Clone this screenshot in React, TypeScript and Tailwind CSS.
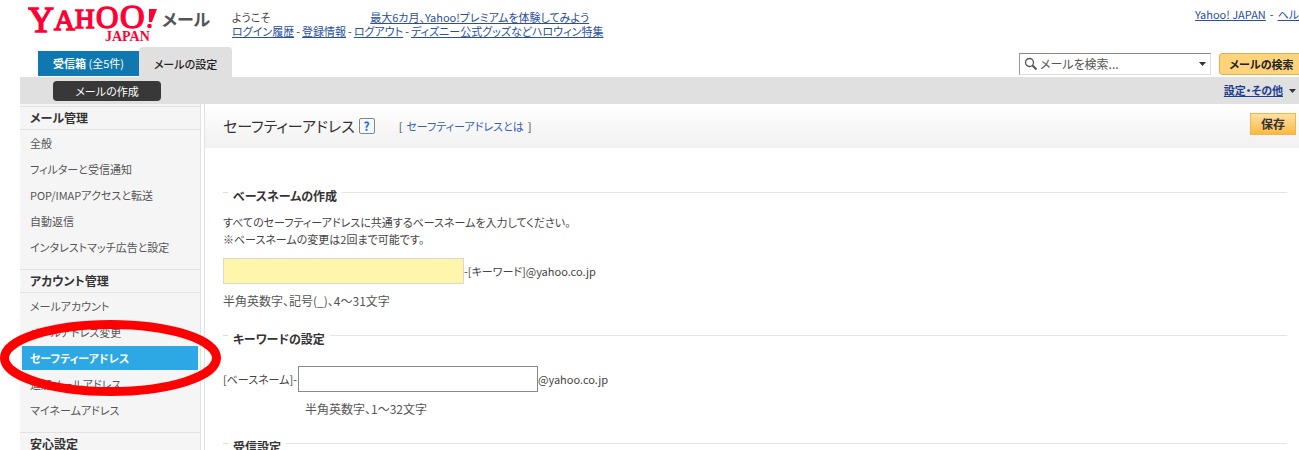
import { type ReactNode } from 'react';
import clsx from 'clsx';

const menu = [
  {
    title: 'メール管理',
    items: [
      '全般',
      'フィルターと受信通知',
      'POP/IMAPアクセスと転送',
      '自動返信',
      'インタレストマッチ広告と設定',
    ],
  },
  {
    title: 'アカウント管理',
    items: [
      'メールアカウント',
      'メールアドレス変更',
      'セーフティーアドレス',
      '追加メールアドレス',
      'マイネームアドレス',
    ],
  },
  { title: '安心設定', items: [] },
];

const current = 'セーフティーアドレス';

function Logo() {
  return (
    <a href="#" className="flex shrink-0">
      <svg width="184" height="44" viewBox="0 0 184 44" role="img" aria-label="Yahoo! JAPAN メール">
        <g fill="#ff0033" fontFamily="'Liberation Serif', serif">
          <g stroke="#ff0033">
            <text x="0" y="32" fontSize="36" strokeWidth="1.500">Y</text>
            <text x="26" y="30" fontSize="29" strokeWidth="1.500">A</text>
            <text x="47" y="28" fontSize="27" strokeWidth="1.500">H</text>
            <text x="68" y="28" fontSize="31" strokeWidth="1.500">O</text>
            <text x="92" y="28" fontSize="34" strokeWidth="1.500">O</text>
          </g>
          <path d="M121 9h8l-5 13h-3z" />
          <circle cx="121.500" cy="26" r="2.300" />
          <text x="77" y="41" fontSize="14" fontWeight="700">JAPAN</text>
        </g>
        <text x="134" y="26" fontSize="17" fontWeight="700" fill="#555" fontFamily="'Noto Sans CJK JP', sans-serif">
          メール
        </text>
      </svg>
    </a>
  );
}

function Caret() {
  return (
    <svg width="7" height="4" viewBox="0 0 7 4" aria-hidden="true">
      <path d="M0 0h7L3.500 4z" fill="#333" />
    </svg>
  );
}

function Header() {
  return (
    <header className="flex h-[47px] items-start pl-7">
      <Logo />
      <div className="ml-5 pt-2.5 leading-[14px]">
        <div className="flex gap-25">
          <span>ようこそ</span>
          <a href="#" className="text-[#2a4f9c] underline">最大6カ月、Yahoo!プレミアムを体験してみよう</a>
        </div>
        <nav className="flex gap-0.5">
          <a href="#" className="text-[#2a4f9c] underline">ログイン履歴</a>-
          <a href="#" className="text-[#2a4f9c] underline">登録情報</a>-
          <a href="#" className="text-[#2a4f9c] underline">ログアウト</a>-
          <a href="#" className="text-[#2a4f9c] underline">ディズニー公式グッズなどハロウィン特集</a>
        </nav>
      </div>
      <nav className="ml-auto flex w-[104px] gap-1 overflow-hidden pt-1.5 leading-4">
        <a href="#" className="text-[#2a4f9c] underline">Yahoo! JAPAN</a>-
        <a href="#" className="text-[#2a4f9c] underline">ヘルプ</a>
      </nav>
    </header>
  );
}

function TabBar() {
  return (
    <div className="flex h-[30px] items-end pl-[38px]">
      <button className="mb-px h-[25px] w-[101px] bg-[#0f78b0] text-white">
        <b>受信箱</b> (全5件)
      </button>
      <button className="h-[30px] w-[93px] rounded-t bg-[#e0e0e0] pt-1 font-medium text-[#222]">メールの設定</button>
      <form className="mb-0.5 ml-auto flex gap-2">
        <label className="flex h-[22px] w-48 items-center border border-[#ddd] border-t-[#888] border-l-[#999] bg-white px-1">
          <svg width="14" height="14" viewBox="0 0 14 14" fill="none" stroke="#555" aria-hidden="true">
            <circle cx="5.500" cy="5.500" r="4" strokeWidth="1.300" />
            <path d="M8.500 8.500l4 4" strokeWidth="2" />
          </svg>
          <input
            aria-label="メールを検索"
            placeholder="メールを検索..."
            className="min-w-0 flex-1 pl-0.5 text-xs outline-none placeholder:text-[#555]"
          />
          <Caret />
        </label>
        <button className="h-[22px] w-20 rounded-l border border-r-0 border-[#e0b050] bg-[#fdd37b] pl-1 font-bold text-[#222]">
          メールの検索
        </button>
      </form>
    </div>
  );
}

function Toolbar() {
  return (
    <div className="ml-5 flex h-[27px] items-center justify-between bg-[#e0e0e0] pr-[3px] pl-[33px]">
      <button className="h-5 w-[108px] rounded bg-[#383838] leading-5 text-white">メールの作成</button>
      <div className="flex items-center gap-1.5">
        <a href="#" className="font-bold text-[#1d3f8f] underline">設定・その他</a>
        <Caret />
      </div>
    </div>
  );
}

function Sidebar() {
  return (
    <nav className="w-[181px] shrink-0 border-r border-[#e2e2e2] bg-[#f5f5f5] pt-0.5">
      {menu.map((group) => (
        <section key={group.title} className="pb-[9px]">
          <h2 className="h-6 border-y border-[#e2e2e2] pl-2.5 text-xs leading-[22px] font-bold text-[#333]">
            {group.title}
          </h2>
          <ul>
            {group.items.map((item) => (
              <li key={item} className="relative h-[26px] px-0.5 py-px">
                <a
                  href="#"
                  className={clsx(
                    'block h-6 pl-2 leading-6',
                    item === current ? 'bg-[#2ea7e5] font-bold text-white' : 'text-[#555]',
                  )}
                >
                  {item}
                </a>
                {item === current && (
                  <svg
                    className="pointer-events-none absolute -top-[25px] -left-5 z-10"
                    width="222"
                    height="76"
                    viewBox="0 0 222 76"
                    aria-hidden="true"
                  >
                    <ellipse cx="110.500" cy="38" rx="106" ry="33.500" fill="none" stroke="#f00" strokeWidth="9" />
                  </svg>
                )}
              </li>
            ))}
          </ul>
        </section>
      ))}
    </nav>
  );
}

// Section heading with a thin rule running through it
function SectionTitle({ children }: { children: ReactNode }) {
  return (
    <h2 className="flex h-5 items-start gap-[5px] text-xs leading-5 font-bold text-[#333]">
      <span className="mt-1.5 h-px w-[5px] bg-[#ddd]" />
      {children}
      <span className="mt-1.5 h-px flex-1 bg-[#e4e4e4]" />
    </h2>
  );
}

function App() {
  return (
    <div className="flex h-screen flex-col overflow-hidden bg-white font-['Noto_Sans_CJK_JP',sans-serif] text-[11px] whitespace-nowrap text-[#444] [font-feature-settings:'palt']">
      <Header />
      <TabBar />
      <Toolbar />
      <div className="flex min-h-0 flex-1 pl-5">
        <Sidebar />
        <main className="ml-[3px] min-w-0 flex-1 border-l border-[#e2e2e2]">
          <div className="flex h-11 items-center bg-linear-to-b from-white to-[#f1f1f1] pr-[3px] pl-[18px]">
            <h1 className="text-[15px] text-[#333]">セーフティーアドレス</h1>
            <button
              aria-label="ヘルプ"
              className="ml-1 size-4 rounded-xs border border-[#888] bg-[#f4f8ff] text-xs leading-[14px] font-bold text-[#2266dd]"
            >
              ?
            </button>
            <span className="ml-6 flex gap-1">
              [ <a href="#" className="text-[#3a62a8]">セーフティーアドレスとは</a> ]
            </span>
            <button className="mb-1 ml-auto h-[22px] w-[46px] border border-[#f0b64e] bg-linear-to-b from-[#ffe0a0] to-[#fcb93c] text-xs font-bold text-[#333]">
              保存
            </button>
          </div>
          <form className="pt-[38px] pr-3 pl-[18px] leading-[17px]">
            <SectionTitle>ベースネームの作成</SectionTitle>
            <p className="mt-2">
              すべてのセーフティーアドレスに共通するベースネームを入力してください。
              <br />
              ※ベースネームの変更は2回まで可能です。
            </p>
            <div className="mt-2.5 flex h-[26px] items-center">
              <input aria-label="ベースネーム" className="h-[26px] w-[241px] border border-[#d8d8cc] bg-[#fff6ac] px-1" />
              -[キーワード]@yahoo.co.jp
            </div>
            <p className="mt-2 text-xs leading-[17px] text-[#555]">半角英数字、記号(_)、4～31文字</p>
            <div className="mt-5">
              <SectionTitle>キーワードの設定</SectionTitle>
            </div>
            <div className="mt-[17px] flex h-[26px] items-center">
              <label htmlFor="keyword" className="w-[75px]">[ベースネーム]-</label>
              <input id="keyword" className="h-[26px] w-60 border border-[#888] bg-white px-1" />
              @yahoo.co.jp
            </div>
            <p className="mt-2 pl-[82px] text-xs leading-[17px] text-[#555]">半角英数字、1～32文字</p>
            <div className="mt-5">
              <SectionTitle>受信設定</SectionTitle>
            </div>
          </form>
        </main>
      </div>
    </div>
  );
}

export default App;
